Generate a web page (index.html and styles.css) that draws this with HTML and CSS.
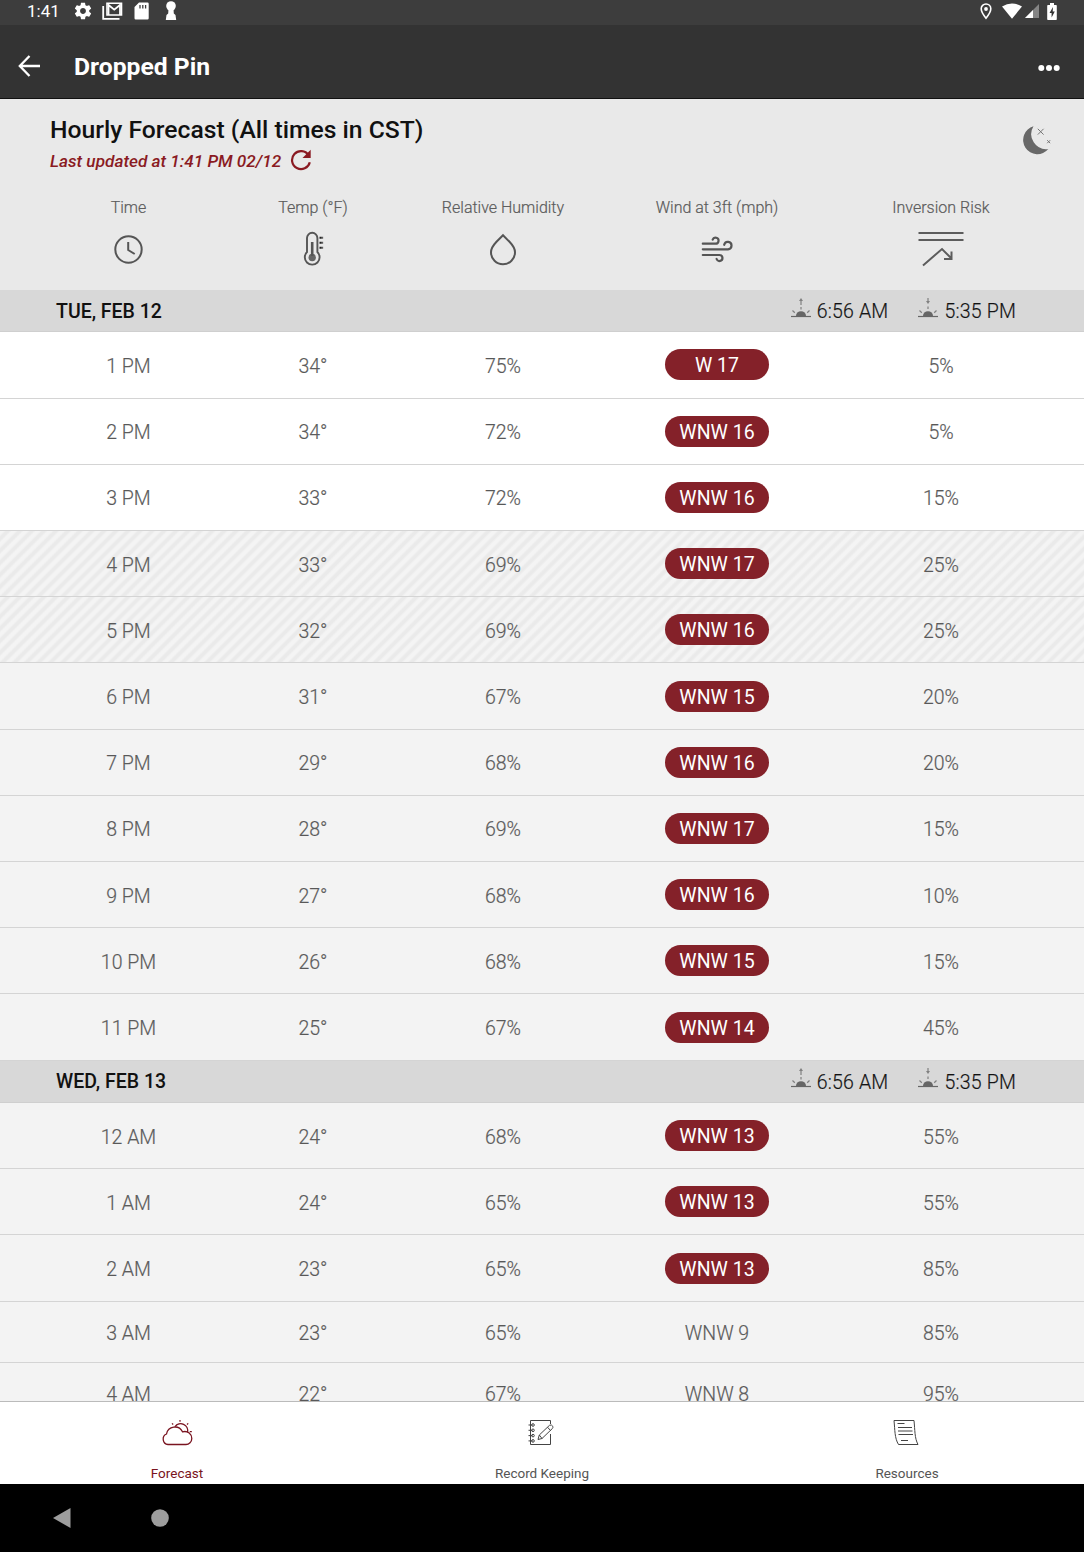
FILE: index.html
```html
<!DOCTYPE html>
<html lang="en">
<head>
<meta charset="utf-8">
<title>Dropped Pin</title>
<link rel="stylesheet" href="styles.css">
</head>
<body>
<svg class="defs" width="0" height="0" aria-hidden="true">
  <symbol id="sunrise" viewBox="0 0 20 20">
    <path d="M0 18.500H20" stroke="#666" stroke-width="1.200"/>
    <path d="M5 18a5 4.800 0 0 1 10 0z" fill="#666"/>
    <path d="M1.500 12.500l2.300 2.200M18.500 12.500l-2.300 2.200M10 3v4M10 9v2.500" stroke="#808080" stroke-width="1.200"/>
    <path d="M10 0l2 3h-4z" fill="#808080"/>
  </symbol>
  <symbol id="sunset" viewBox="0 0 20 20">
    <path d="M0 18.500H20" stroke="#666" stroke-width="1.200"/>
    <path d="M5 18a5 4.800 0 0 1 10 0z" fill="#666"/>
    <path d="M1.500 12.500l2.300 2.200M18.500 12.500l-2.300 2.200M10 0v3M10 8.500v2.500" stroke="#808080" stroke-width="1.200"/>
    <path d="M10 6l2-3h-4z" fill="#808080"/>
  </symbol>
</svg>
<div class="screen">
  <div class="status">
    <span class="clock">1:41</span>
    <svg class="st-gear" width="20" height="20" viewBox="0 0 24 24" fill="#fff"><path d="M19.430 12.980c.04-.32.07-.64.07-.98s-.03-.66-.07-.98l2.110-1.650c.19-.15.24-.42.12-.64l-2-3.460c-.12-.22-.39-.3-.61-.22l-2.490 1c-.52-.4-1.080-.73-1.690-.98l-.38-2.650C14.460 2.180 14.250 2 14 2h-4c-.25 0-.46.18-.49.42l-.38 2.650c-.61.25-1.170.59-1.690.98l-2.490-1c-.23-.09-.49 0-.61.22l-2 3.460c-.13.22-.07.49.12.64l2.110 1.650c-.04.32-.07.65-.07.98s.03.66.07.98l-2.110 1.650c-.19.15-.24.42-.12.64l2 3.460c.12.22.39.3.61.22l2.490-1c.52.4 1.080.73 1.690.98l.38 2.650c.03.24.24.42.49.42h4c.25 0 .46-.18.49-.42l.38-2.650c.61-.25 1.170-.59 1.690-.98l2.490 1c.23.09.49 0 .61-.22l2-3.460c.12-.22.07-.49-.12-.64l-2.110-1.650zM12 15.500c-1.930 0-3.500-1.570-3.500-3.500s1.570-3.500 3.500-3.500 3.500 1.570 3.500 3.500-1.570 3.500-3.500 3.500z"/></svg>
    <svg class="st-mail" width="21" height="18" viewBox="0 0 21 18" fill="none" stroke="#fff"><path d="M1.200 4v12.800H17.500" stroke-width="1.800"/><path d="M5 1.300H19.500V13H5z" stroke-width="1.600"/><path d="M6.500 13V3l5.750 4.700L18 3V13" stroke-width="1.800"/></svg>
    <svg class="st-card" width="15" height="18" viewBox="0 0 15 18"><path d="M5 .5h8.500a1.200 1.200 0 0 1 1.200 1.200v14.600a1.200 1.200 0 0 1-1.200 1.200H1.700a1.200 1.200 0 0 1-1.200-1.200V5z" fill="#fff"/><path d="M6 3v3.500M8.800 3v3.500M11.600 3v3.500" stroke="#3d3d3d" stroke-width="1.300"/></svg>
    <svg class="st-key" width="12" height="20" viewBox="0 0 12 20" fill="#fff"><circle cx="6" cy="5" r="4.800"/><path d="M3.500 8h5l.3 4.500 1.700 1.500.7 5H.8l.7-5 1.700-1.500z"/></svg>
    <span class="grow"></span>
    <svg class="st-pin" width="12" height="17" viewBox="0 0 12 17"><path d="M6 1a4.800 4.800 0 0 0-4.800 4.800C1.200 9.300 6 15.200 6 15.200s4.800-5.900 4.800-9.400A4.800 4.800 0 0 0 6 1z" fill="none" stroke="#fff" stroke-width="1.600"/><circle cx="6" cy="6" r="1.900" fill="#fff"/></svg>
    <svg class="st-wifi" width="20" height="16" viewBox="0 0 20 16"><path d="M0 3.500Q10-2.500 20 3.500L10 15.700z" fill="#fff"/></svg>
    <svg class="st-sig" width="14" height="14" viewBox="0 0 14 14"><path d="M14 0V14H0z" fill="#858585"/><path d="M8 6v8H0z" fill="#fff"/></svg>
    <svg class="st-bat" width="10" height="17" viewBox="0 0 10 17"><path d="M3 0h4v2h2a.8.800 0 0 1 .8.800v13.400a.8.800 0 0 1-.8.800H1a.8.800 0 0 1-.8-.8V2.800A.8.800 0 0 1 1 2h2z" fill="#fff"/><path d="M6 4L2.500 10H4.600V14.500L7.800 8.500H5.700z" fill="#333"/></svg>
  </div>
  <header class="appbar">
    <svg class="back" width="22" height="22" viewBox="0 0 22 22" fill="none" stroke="#fff" stroke-width="2.300"><path d="M11.500 1L1.800 11l9.700 10M2 11H22"/></svg>
    <h1>Dropped Pin</h1>
    <svg class="more" width="22" height="8" viewBox="0 0 22 8" fill="#fff"><circle cx="3.300" cy="4" r="3"/><circle cx="11" cy="4" r="3"/><circle cx="18.700" cy="4" r="3"/></svg>
  </header>
  <section class="intro">
    <div class="titles">
      <h2>Hourly Forecast (All times in CST)</h2>
      <p class="updated"><span>Last updated at 1:41 PM 02/12</span>
        <svg width="22" height="22" viewBox="0 0 22 22"><path d="M18.600 6.200A9 9 0 1 0 19.800 13.200" fill="none" stroke="#8a1a22" stroke-width="2.200"/><path d="M20.700.8v8.200h-8.200z" fill="#8a1a22"/></svg></p>
    </div>
    <svg class="moon" width="30" height="30" viewBox="0 0 30 30"><path d="M10.500 1.300A14.200 14.200 0 1 0 25.300 24A15 15 0 0 1 10.500 1.300z" fill="#686868"/><path d="M14.800 3.800l5.800 5.800M20.600 3.800l-5.800 5.800M24.200 15.200l3 3M27.200 15.200l-3 3" stroke="#777" stroke-width="1"/></svg>
  </section>
  <div class="cols heads">
    <div><span>Time</span><svg width="30" height="36" viewBox="0 0 30 36" fill="none" stroke="#555" stroke-width="2"><circle cx="14.500" cy="18.500" r="13.200"/><path d="M14.200 11v8l6.500 4"/></svg></div>
    <div><span>Temp (°F)</span><svg width="30" height="36" viewBox="0 0 30 36" fill="none" stroke="#555" stroke-width="1.900"><path d="M9 21V7a5 5 0 0 1 10.400 0V21a7.400 7.400 0 1 1-10.400 0z"/><circle cx="14.200" cy="26.500" r="3.700" fill="#666" stroke="none"/><path d="M14.200 11v14" stroke-width="2.600"/><path d="M21.500 6.700h3.600M21.500 11.700h3.600M21.500 16.700h3.600" stroke="#222" stroke-dasharray="2.300 .5"/></svg></div>
    <div><span>Relative Humidity</span><svg width="30" height="36" viewBox="0 0 30 36" fill="none" stroke="#555" stroke-width="2"><path d="M15 4.200l6.500 6.600C25 14.500 27 17.500 27 21.300a12 12 0 0 1-24 0c0-3.800 2-6.800 5.500-10.500z"/></svg></div>
    <div><span>Wind at 3ft (mph)</span><svg width="34" height="36" viewBox="0 0 34 36" fill="none" stroke="#555" stroke-width="2.200" stroke-linecap="round"><path d="M2.800 12.700H15.500a3 3 0 1 0-2.800-4M2.800 18.300H28a3.700 3.700 0 1 0-3.800-4.500M2.800 24H19.500a3 3 0 1 1-2.900 4"/></svg></div>
    <div><span>Inversion Risk</span><svg width="46" height="36" viewBox="0 0 46 36" fill="none" stroke="#5c5c5c" stroke-width="2"><path d="M.5 2h45M.5 9h45M5 34.500L24 18l9.500 9.500M33.500 20.500v7.500h-7.500"/></svg></div>
  </div>
  <main class="list">
    <div class="day"><b>TUE, FEB 12</b><svg width="20" height="20"><use href="#sunrise"/></svg><span>6:56 AM</span><svg class="set" width="20" height="20"><use href="#sunset"/></svg><span>5:35 PM</span></div>
    <div class="cols row light"><span>1 PM</span><span>34°</span><span>75%</span><span><i class="pill">W 17</i></span><span>5%</span></div>
    <div class="cols row light"><span>2 PM</span><span>34°</span><span>72%</span><span><i class="pill">WNW 16</i></span><span>5%</span></div>
    <div class="cols row light"><span>3 PM</span><span>33°</span><span>72%</span><span><i class="pill">WNW 16</i></span><span>15%</span></div>
    <div class="cols row dusk"><span>4 PM</span><span>33°</span><span>69%</span><span><i class="pill">WNW 17</i></span><span>25%</span></div>
    <div class="cols row dusk"><span>5 PM</span><span>32°</span><span>69%</span><span><i class="pill">WNW 16</i></span><span>25%</span></div>
    <div class="cols row"><span>6 PM</span><span>31°</span><span>67%</span><span><i class="pill">WNW 15</i></span><span>20%</span></div>
    <div class="cols row"><span>7 PM</span><span>29°</span><span>68%</span><span><i class="pill">WNW 16</i></span><span>20%</span></div>
    <div class="cols row"><span>8 PM</span><span>28°</span><span>69%</span><span><i class="pill">WNW 17</i></span><span>15%</span></div>
    <div class="cols row"><span>9 PM</span><span>27°</span><span>68%</span><span><i class="pill">WNW 16</i></span><span>10%</span></div>
    <div class="cols row"><span>10 PM</span><span>26°</span><span>68%</span><span><i class="pill">WNW 15</i></span><span>15%</span></div>
    <div class="cols row"><span>11 PM</span><span>25°</span><span>67%</span><span><i class="pill">WNW 14</i></span><span>45%</span></div>
    <div class="day"><b>WED, FEB 13</b><svg width="20" height="20"><use href="#sunrise"/></svg><span>6:56 AM</span><svg class="set" width="20" height="20"><use href="#sunset"/></svg><span>5:35 PM</span></div>
    <div class="cols row"><span>12 AM</span><span>24°</span><span>68%</span><span><i class="pill">WNW 13</i></span><span>55%</span></div>
    <div class="cols row"><span>1 AM</span><span>24°</span><span>65%</span><span><i class="pill">WNW 13</i></span><span>55%</span></div>
    <div class="cols row"><span>2 AM</span><span>23°</span><span>65%</span><span><i class="pill">WNW 13</i></span><span>85%</span></div>
    <div class="cols row calm"><span>3 AM</span><span>23°</span><span>65%</span><span>WNW 9</span><span>85%</span></div>
    <div class="cols row calm"><span>4 AM</span><span>22°</span><span>67%</span><span>WNW 8</span><span>95%</span></div>
  </main>
  <nav class="tabs">
    <div class="active"><svg width="34" height="30" viewBox="0 0 34 30" fill="none" stroke="#7a1420" stroke-width="1.300"><path d="M8 26.500A5.500 5.500 0 0 1 6.500 16 8.500 8.500 0 0 1 22.500 13.800C28 12.500 31.800 16 31.800 20.500 31.800 24 29 26.500 26 26.500z"/><path d="M15 8.600A7 7 0 0 1 27.500 14.300"/><path d="M20 2v1.700M12 5.300l1.200 1.200M28.200 5.300l-1.200 1.200M29.800 13.700h2" stroke-width="1.200"/></svg><span>Forecast</span></div>
    <div><svg width="34" height="30" viewBox="0 0 34 30" fill="none" stroke="#444" stroke-width="1"><path d="M25.500 6V2.500H5.500V26.500H25.500V16"/><path d="M3.500 7h4M3.500 12.300h4M3.500 17.600h4M3.500 22.900h4"/><circle cx="8" cy="7" r="1.300"/><circle cx="8" cy="12.300" r="1.300"/><circle cx="8" cy="17.600" r="1.300"/><circle cx="8" cy="22.900" r="1.300"/><path d="M13 21.500l1.300-4.500L24.500 7.300q2.200-1 3.300 1 .4 1.300-.5 2.300L17 20.500zM14.300 17l2.700 3.500M22.500 9.200l3 3.300"/></svg><span>Record Keeping</span></div>
    <div><svg width="34" height="30" viewBox="0 0 34 30" fill="none" stroke="#444" stroke-width="1"><path d="M4 2.500H24C25 12 24.500 20 28 26.500H8.500C4.500 20 5 12 4 2.500z"/><path d="M7.500 5.500h7M8 9.500h14M8 13h14.500M8.500 16.500h14.500M11 22.500h7"/></svg><span>Resources</span></div>
  </nav>
  <footer class="sysnav">
    <svg class="tri" width="18" height="20" viewBox="0 0 18 20"><path d="M17.500 0v20L0 10z" fill="#9d9d9d"/></svg>
    <svg width="18" height="18" viewBox="0 0 18 18"><circle cx="9" cy="9" r="8.800" fill="#9d9d9d"/></svg>
  </footer>
</div>
</body>
</html>
```
FILE: styles.css
```css
* { box-sizing: border-box; }
body { margin: 0; font-family: Roboto, "Liberation Sans", sans-serif; color: #111; }
h1, h2, p { margin: 0; }
svg { display: block; flex: none; }
.defs { position: absolute; }
.screen { width: 1084px; height: 1552px; display: flex; flex-direction: column; overflow: hidden; background: #fff; }
.screen > * { flex: none; }

.status { height: 25px; background: #3d3d3d; display: flex; align-items: flex-start; padding: 0 27px; }
.clock { width: 46px; color: #fff; font-size: 17px; line-height: 23px; }
.st-gear { margin-top: 1px; }
.st-mail { margin: 2px 0 0 9px; }
.st-card { margin: 2px 0 0 11px; }
.st-key { margin: 1px 0 0 16px; }
.grow { flex: 1; }
.st-pin { margin: 3px 10px 0 0; }
.st-wifi { margin: 3px 3px 0 0; }
.st-sig { margin: 4px 8px 0 0; }
.st-bat { margin-top: 3px; }

.appbar { height: 74px; background: #333; border-bottom: 1px solid #111; display: flex; align-items: center; padding: 9px 24px 0 18px; }
.appbar h1 { flex: 1; margin: 2px 0 0 34px; font-size: 24.700px; line-height: 30px; font-weight: 700; color: #fff; }
.more { margin-top: 4px; }

.intro { height: 92px; background: #e9e9e9; display: flex; justify-content: space-between; padding: 15px 31px 0 50px; }
.intro h2 { font-size: 24.700px; line-height: 31px; font-weight: 500; }
.updated { display: flex; gap: 9px; align-items: center; color: #8a1a22; font-size: 17.200px; line-height: 22px; font-style: italic; font-weight: 500; margin-top: 3px; }
.updated span { padding-top: 2px; }
.moon { margin-top: 11px; }

.cols { display: grid; grid-template-columns: 157px 212px 168px 260px 188px; padding-left: 50px; text-align: center; }
.heads { height: 99px; background: #e9e9e9; color: #555; font-size: 16px; line-height: 20px; padding-top: 7px; font-weight: 300; -webkit-text-stroke: .2px #666; }
.heads > div { display: flex; flex-direction: column; align-items: center; gap: 13px; }

.list { height: 1111px; overflow: hidden; background: #f3f3f3; }
.day { height: 42.300px; background: #d8d8d8; display: flex; align-items: center; padding: 1px 68px 0 56px; font-size: 19.500px; border-bottom: 1px solid #cfcfcf; }
.day b { flex: 1; font-size: 19.500px; font-weight: 500; }
.day svg { margin: -7px 6px 0 0; }
.day .set { margin-left: 30px; }
.day span { font-weight: 300; letter-spacing: .2px; padding-top: 1px; -webkit-text-stroke: .2px #222; }
.row { height: 66.220px; border-bottom: 1px solid #d4d4d4; align-items: center; font-size: 19.500px; line-height: 24px; font-weight: 300; color: #585858; background: #f3f3f3; -webkit-text-stroke: .2px #686868; }
.row > span { display: flex; justify-content: center; padding-top: 4px; }
.row > span:has(.pill) { padding-top: 0; }
.light { background: #fff; }
.dusk { background: repeating-linear-gradient(135deg, #f4f4f4 0 2.500px, #eaeaea 4.500px 6.500px, #f4f4f4 8.500px); }
.calm { height: 61.300px; }
.pill { width: 104px; height: 31px; border-radius: 16px; background: #842129; color: #fff; font-style: normal; font-weight: 400; line-height: 33px; -webkit-text-stroke: 0; }

.tabs { height: 83px; background: #fff; border-top: 1px solid #bbb; display: grid; grid-template-columns: 354px 376px 354px; font-size: 13.500px; line-height: 18px; color: #555; font-weight: 400; }
.tabs > div { display: flex; flex-direction: column; align-items: center; padding-top: 16px; gap: 16px; }
.tabs .active { color: #7a1420; }

.sysnav { height: 68px; background: #000; display: flex; align-items: center; padding: 0 0 1px 53px; }
.tri { margin-right: 80px; }
```
